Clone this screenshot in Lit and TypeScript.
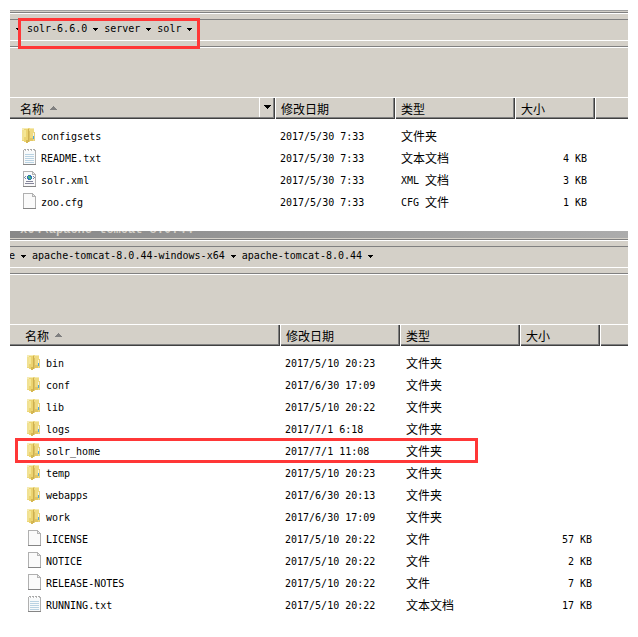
import { LitElement, html, css, svg, nothing } from "lit";
import { customElement, property } from "lit/decorators.js";

type Kind = "folder" | "text" | "xml" | "blank";
interface Entry {
  name: string;
  kind: Kind;
  date: string;
  type: string;
  size?: string;
  marked?: boolean;
}

const folder = (name: string, date: string, marked = false): Entry => ({
  name, kind: "folder", date, type: "文件夹", marked,
});

const SOLR: Entry[] = [
  folder("configsets", "2017/5/30 7:33"),
  { name: "README.txt", kind: "text", date: "2017/5/30 7:33", type: "文本文档", size: "4 KB" },
  { name: "solr.xml", kind: "xml", date: "2017/5/30 7:33", type: "XML 文档", size: "3 KB" },
  { name: "zoo.cfg", kind: "blank", date: "2017/5/30 7:33", type: "CFG 文件", size: "1 KB" },
];

const TOMCAT: Entry[] = [
  folder("bin", "2017/5/10 20:23"),
  folder("conf", "2017/6/30 17:09"),
  folder("lib", "2017/5/10 20:22"),
  folder("logs", "2017/7/1 6:18"),
  folder("solr_home", "2017/7/1 11:08", true),
  folder("temp", "2017/5/10 20:23"),
  folder("webapps", "2017/6/30 20:13"),
  folder("work", "2017/6/30 17:09"),
  { name: "LICENSE", kind: "blank", date: "2017/5/10 20:22", type: "文件", size: "57 KB" },
  { name: "NOTICE", kind: "blank", date: "2017/5/10 20:22", type: "文件", size: "2 KB" },
  { name: "RELEASE-NOTES", kind: "blank", date: "2017/5/10 20:22", type: "文件", size: "7 KB" },
  { name: "RUNNING.txt", kind: "text", date: "2017/5/10 20:22", type: "文本文档", size: "17 KB" },
];

const page = svg`
  <path d="M1.5 .5H10.500L13.500 3.500V15.500H1.500Z" fill="#fafafa" stroke="#b0b0b0"/>
  <path d="M1 15.500H14" stroke="#858585"/>
  <path d="M10.500 1V3.500H13" fill="#ececec" stroke="#b4b4b4"/>`;

const ICONS = {
  folder: svg`
    <path d="M0 1H12V14H0Z" fill="#ecd678"/>
    <path d="M0 1H6V3H0Z" fill="#f5ebb4"/>
    <path d="M0 3H2V13H0Z" fill="#f1e193"/>
    <path d="M2 2H6V16H4V15H2Z" fill="#ecd471"/>
    <path d="M2 3H4V10H2Z" fill="#f5e694"/>
    <path d="M4 13H6V16H4Z" fill="#d6b852"/>
    <path d="M6 2H7V15H6Z" fill="#cdaf50"/>
    <path d="M7 1H12V14H8V15H7Z" fill="#efda82"/>
    <path d="M8 1H12V2H8Z" fill="#f5eab2"/>
    <path d="M7 4H8V14H7Z" fill="#dcc162"/>
    <path d="M8 11H11V14H8Z" fill="#e2c664"/>
    <path d="M12 5H13V14H12Z" fill="#e3cf7d"/>
    <path d="M11 6H12V9H11Z" fill="#f8f4dc"/>
    <path d="M11 9H12V12H11Z" fill="#4aa6e2"/>`,
  text: svg`
    <path d="M1.500 1.500H13.500V15.500H1.500Z" fill="#f8fafb" stroke="#b0b0b0"/>
    <path d="M1 15.500H14" stroke="#858585"/>
    <path d="M2 1.500H13" stroke="#fff"/>
    <path d="M2 .5H13" stroke="#aaa" stroke-dasharray="2 1"/>
    <path d="M3 1.500H13" stroke="#bbb" stroke-dasharray="1 2"/>
    <path d="M3 5.500H12M3 7.500H12M3 9.500H12M3 11.500H12M3 13.500H12" stroke="#b9d2e2"/>`,
  xml: svg`${page}
    <path d="M3 5H4V6H3V7H4V8H3V7H2V6H3ZM11 5H12V6H13V7H12V8H11V7H12V6H11Z" fill="#7d86a3"/>
    <path d="M6 4H9V5H10V8H9V9H6V8H5V5H6Z" fill="#2f74b5"/>
    <path d="M6 5H8V6H9V8H7V7H6Z" fill="#4cb87a"/>
    <path d="M4 10.500H11M3 12.500H12" stroke="#85859a"/>`,
  blank: page,
};

const runs = (text: string) =>
  text.split(/([\u4e00-\u9fff]+)/).filter(Boolean).map((part) =>
    /[\u4e00-\u9fff]/.test(part) ? html`<span class="han">${part}</span>` : part);

const arrow = html`<svg class="arrow" viewBox="0 0 5 3" aria-hidden="true"><path d="M0 0H5V1H4V2H3V3H2V2H1V1H0Z"/></svg>`;

@customElement("file-window")
class FileWindow extends LitElement {
  @property() caption = "";
  @property({ attribute: false }) crumbs: string[] = [];
  @property({ attribute: false }) entries: Entry[] = [];
  @property({ type: Boolean }) filter = false;
  @property({ type: Boolean }) markPath = false;
  @property({ type: Boolean, reflect: true }) indented = false;

  static styles = css`
    :host { display: block; --indent: 10px; --first: 265px; color: #000; }
    :host([indented]) { --indent: 15px; --first: 270px; }
    .frame { background: #d4d0c8; }
    .title {
      height: 7px; overflow: hidden; display: flex; align-items: flex-end; padding-left: 10px;
      background: linear-gradient(90deg, #888, #acacac);
      font: bold 12px/16px "Liberation Mono", monospace; color: #d4d0c8; white-space: pre;
    }
    .title.slim { height: 1px; background: #a0a0a0; }
    .bar {
      margin-top: 1px; border-top: 1px solid #808080; box-shadow: inset 0 1px #fff;
      padding: 6px 0 5px;
    }
    .path {
      display: flex; height: 20px; border-top: 1px solid #808080; border-bottom: 1px solid #fff;
      overflow: hidden;
    }
    .lead { margin-left: -1px; }
    .marked-path { position: relative; display: flex; }
    .marked-path::after {
      content: ""; position: absolute; inset: -2px -2px -9px 8px; border: 3px solid #ff3737; pointer-events: none;
    }
    .path.open { overflow: visible; }
    button {
      font: inherit; color: inherit; background: none; border: 0; padding: 0; margin: 0; white-space: nowrap;
    }
    .crumb { line-height: 18px; height: 18px; display: block; }
    .drop { width: 17px; height: 19px; display: flex; align-items: center; justify-content: center; }
    .arrow { width: 5px; height: 3px; display: block; }
    .tools { height: 49px; border-top: 1px solid #808080; box-shadow: inset 0 1px #fff; padding-top: 1px; }
    table { width: 100%; table-layout: fixed; border-collapse: separate; border-spacing: 0; background: #fff; }
    .c-name { width: var(--first); }
    .c-mid { width: 120px; }
    .c-size { width: 80px; }
    th {
      height: 22px; padding: 0; font-size: 12px; font-weight: normal; text-align: left; background: #d4d0c8;
      box-shadow: inset 0 1px #fff, inset 1px 0 #fff, inset -1px -1px #404040, inset -2px -2px #808080;
    }
    th.rest { box-shadow: inset 0 1px #fff, inset 1px 0 #fff, inset 0 -1px #404040, inset 0 -2px #808080; }
    th:first-child { box-shadow: inset 0 1px #fff, inset -1px -1px #404040, inset -2px -2px #808080; }
    .head { display: flex; align-items: center; height: 22px; padding-left: 6px; }
    th:first-child .head { padding-left: var(--indent); }
    .sort { width: 7px; height: 4px; margin-left: 6px; fill: #808080; }
    .filter {
      margin-left: auto; width: 16px; height: 20px; align-self: flex-start; border-left: 1px solid #fff;
      display: flex; align-items: center; justify-content: center;
    }
    .filter .arrow { width: 7px; height: 4px; }
    td { height: 20px; padding: 2px 0 0 5px; line-height: 20px; white-space: nowrap; vertical-align: top; }
    .gap td { height: 6px; padding: 0; }
    td.name { padding-left: calc(var(--indent) + 2px); position: relative; }
    .file { display: flex; align-items: flex-start; height: 20px; }
    .file svg { width: 16px; height: 16px; flex: none; margin-right: 3px; }
    td.type { padding-left: 6px; }
    td.size { text-align: right; padding-right: 8px; white-space: pre; }
    .han { font-size: 12px; line-height: 16px; vertical-align: -1px; }
    .marked td.name::after {
      content: ""; position: absolute; left: 5px; top: -2px; width: 457px; height: 19px;
      border: 3px solid #ff3737; pointer-events: none;
    }
  `;

  private path() {
    return this.crumbs.map((c, i) => html`
      ${c ? html`<button class="crumb ${i === 0 ? "lead" : ""}">${c}</button>` : nothing}
      <button class="drop" aria-label="展开">${arrow}</button>`);
  }

  render() {
    return html`
      <section class="frame">
        <div class="title ${this.caption ? "" : "slim"}">${this.caption}</div>
        <div class="bar">
          <nav class="path ${this.markPath ? "open" : ""}">
            ${this.markPath ? html`<div class="marked-path">${this.path()}</div>` : this.path()}
          </nav>
        </div>
        <div class="tools"></div>
        <table>
          <colgroup><col class="c-name"><col class="c-mid"><col class="c-mid"><col class="c-size"><col></colgroup>
          <thead><tr>
            <th><div class="head"><span>名称</span>
              <svg class="sort" viewBox="0 0 7 4" aria-hidden="true"><path d="M3 0H4V1H5V2H6V3H7V4H0V3H1V2H2V1H3Z"/></svg>
              ${this.filter ? html`<button class="filter" aria-label="筛选">
                <svg class="arrow" viewBox="0 0 7 4" aria-hidden="true"><path d="M0 0H7V1H6V2H5V3H4V4H3V3H2V2H1V1H0Z"/></svg></button>` : nothing}
            </div></th>
            ${["修改日期", "类型", "大小"].map((h) => html`<th><div class="head">${h}</div></th>`)}
            <th class="rest"></th>
          </tr></thead>
          <tbody>
            <tr class="gap"><td colspan="5"></td></tr>
            ${this.entries.map((e) => html`
              <tr class=${e.marked ? "marked" : ""}>
                <td class="name"><div class="file">
                  <svg viewBox="0 0 16 16" shape-rendering="crispEdges" aria-hidden="true">${ICONS[e.kind]}</svg>${e.name}
                </div></td>
                <td>${e.date}</td>
                <td class="type">${runs(e.type)}</td>
                <td class="size">${e.size ?? ""}</td>
                <td></td>
              </tr>`)}
          </tbody>
        </table>
      </section>`;
  }
}

@customElement("app-root")
class AppRoot extends LitElement {
  static styles = css`
    :host {
      display: flex; flex-direction: column; gap: 18px; min-height: 100vh; box-sizing: border-box;
      padding: 10px 10px 20px; background: #fff;
      font: 10px "DejaVu Sans Mono", "Noto Sans CJK SC", monospace;
    }
  `;

  render() {
    return html`
      <file-window .crumbs=${["", "solr-6.6.0", "server", "solr"]} .entries=${SOLR} filter .markPath=${true}></file-window>
      <file-window indented caption="x64\\apache-tomcat-8.0.44"
        .crumbs=${["e", "apache-tomcat-8.0.44-windows-x64", "apache-tomcat-8.0.44"]} .entries=${TOMCAT}></file-window>`;
  }
}
